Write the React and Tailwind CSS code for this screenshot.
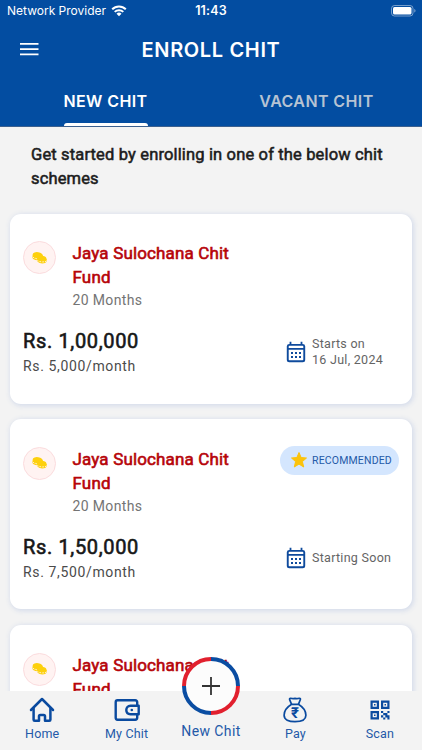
const chits = [
  { amount: "Rs. 1,00,000", monthly: "Rs. 5,000/month", starts: ["Starts on", "16 Jul, 2024"] },
  { amount: "Rs. 1,50,000", monthly: "Rs. 7,500/month", starts: ["Starting Soon"], recommended: true },
  { amount: "Rs. 2,00,000", monthly: "Rs. 10,000/month", starts: ["Starting Soon"] },
];

const WifiIcon = () => (
  <svg width="16" height="12" viewBox="0 0 16 12" fill="none" stroke="#fff" strokeWidth="2">
    <path d="M1.200 4.200a9.600 9.600 0 0 1 13.600 0" />
    <path d="M3.700 6.900a6.200 6.200 0 0 1 8.600 0" />
    <path d="M5.500 8.700a3.600 3.600 0 0 1 5 0L8 11.200z" fill="#fff" stroke="none" />
  </svg>
);

const BatteryIcon = () => (
  <svg width="26" height="12" viewBox="0 0 26 12">
    <rect x="0.500" y="0.500" width="21.500" height="10.500" rx="3" fill="none" stroke="#fff" strokeOpacity="0.450" />
    <rect x="2" y="2" width="18.500" height="7.500" rx="1.500" fill="#fff" />
    <path d="M23.300 4v3.600c.8-.3 1.200-1 1.200-1.800s-.4-1.500-1.200-1.800z" fill="#fff" fillOpacity="0.500" />
  </svg>
);

const CoinsIcon = () => (
  <svg width="16" height="14" viewBox="0 0 16 14">
    <g fill="#fdd00d">
      <ellipse cx="5.800" cy="4.200" rx="5.200" ry="3" transform="rotate(10 5.800 4.200)" />
      <path d="M.5 4.200v2.800c.6 1.500 2.400 2.100 4.300 2.200V6z" />
      <ellipse cx="9.800" cy="7.600" rx="4.800" ry="2.900" transform="rotate(10 9.800 7.600)" />
      <path d="M5 7.200v2.600c1 2.700 8.200 3.900 9.600.7V8z" />
    </g>
    <path d="M1 6.200c1 1 2.300 1.300 3.700 1.300M5.300 9.300c1.800 1.700 6.300 2.200 9 .9" fill="none" stroke="#fff3e0" strokeWidth="0.900" strokeDasharray="1.600 1" />
  </svg>
);

const CalendarIcon = () => (
  <svg width="20" height="22" viewBox="0 0 20 22" fill="#0f4b9d">
    <path
      fillRule="evenodd"
      d="M3.600.7h1.800V3h9.200V.7h1.800V3h.3A2.500 2.500 0 0 1 19.200 5.300v13.400a2.500 2.500 0 0 1-2.500 2.500H3.300A2.500 2.500 0 0 1 .8 18.700V5.300A2.500 2.500 0 0 1 3.300 3h.3zM2.700 8.800v9.700c0 .5.300.8.800.8h13c.5 0 .8-.3.800-.8V8.800zM2.700 5.400V7h14.600V5.400c0-.4-.3-.7-.8-.7h-13c-.5 0-.8.3-.8.700z"
    />
    <path d="M5 11h2v2H5zM9 11h2v2H9zM13 11h2v2h-2zM5 15h2v2H5zM9 15h2v2H9zM13 15h2v2h-2z" />
  </svg>
);

const StarIcon = () => (
  <svg width="18" height="18" viewBox="0 0 18 18">
    <path
      d="M9 1.500l2.100 5 5.400.500-4.100 3.600 1.300 5.400L9 13.100 4.300 16l1.300-5.400L1.500 7l5.400-.5z"
      fill="#fcc30b"
      stroke="#fcc30b"
      strokeLinejoin="round"
    />
  </svg>
);

const HomeIcon = () => (
  <svg width="26" height="26" viewBox="0 0 26 26" fill="none" stroke="#0a4a9f" strokeWidth="2.500" strokeLinecap="round" strokeLinejoin="round">
    <path d="M2 13L13 2l11 11" />
    <path d="M4.600 11.500v11.200c0 .7.400 1.100 1.100 1.100H10v-4.500c0-.8.500-1.300 1.300-1.300h3.400c.8 0 1.300.5 1.300 1.300v4.500h4.300c.7 0 1.100-.4 1.100-1.100V11.500" />
  </svg>
);

const WalletIcon = () => (
  <svg width="26" height="22" viewBox="0 0 26 22" fill="none" stroke="#0a4a9f" strokeWidth="2.400" strokeLinejoin="round">
    <path d="M23.200 6.500V3.200C23.200 2 22.500 1.300 21.200 1.300H3.500C2.300 1.300 1.700 2 1.700 3.200v15.600c0 1.200.6 1.900 1.800 1.900h17.700c1.300 0 2-.7 2-1.900v-3.300" />
    <path d="M16.500 6.800h8.200v8.400h-8.200c-2.700 0-4.200-1.700-4.200-4.200s1.500-4.200 4.200-4.200z" />
    <circle cx="17.800" cy="11" r="1.300" fill="#0a4a9f" stroke="none" />
  </svg>
);

const PayIcon = () => (
  <svg width="24" height="26" viewBox="0 0 24 26" fill="none" stroke="#0a4a9f" strokeWidth="1.700" strokeLinejoin="round">
    <path d="M8.600 7.300L6.700 2.800c-.4-1 .1-1.700 1.100-1.500 1.500.5 2.500.5 4.200.1 1.700.4 2.700.4 4.200-.1 1-.2 1.500.5 1.100 1.500l-1.900 4.500" />
    <path d="M8.600 7.300h6.800c4.600 2.800 7.500 7 7.500 11 0 4.400-4.600 6.400-10.900 6.400S1.100 22.700 1.100 18.300c0-4 2.900-8.200 7.500-11z" />
    <text x="12" y="20.800" textAnchor="middle" className="font-['Roboto',sans-serif] text-[15px] font-bold" fill="#0a4a9f" stroke="none">₹</text>
  </svg>
);

const ScanIcon = () => (
  <svg width="20" height="20" viewBox="0 0 20 20" fill="#0a4a9f">
    <path
      fillRule="evenodd"
      d="M.5.5h8.500V9H.5zM2.700 2.700v4.100h4.100V2.700zM11 .5h8.500V9H11zM13.200 2.700v4.100h4.100V2.700zM.5 11h8.500v8.500H.5zM2.700 13.200v4.100h4.100v-4.100z"
    />
    <path d="M4 4h1.500v1.500H4zM14.500 4H16v1.500h-1.500zM4 14.500h1.500V16H4zM11 11h2.200v2.100H11zM13.200 13.100h2.100v2.100h-2.100zM11 15.200h2.200v2.200H11zM13.200 17.400h2.100v2.100h-2.100zM15.300 15.200h2.100v2.200h-2.100zM17.400 11h2.100v2.100h-2.100zM15.300 13.100h2.100v2.100h-2.100zM17.400 15.200h2.100v4.300h-2.100z" />
  </svg>
);

const ChitCard = ({ chit }) => (
  <article className="flex h-[190px] shrink-0 flex-col rounded-[11px] bg-white px-[13px] shadow-[1px_1px_5px_1px_#d5dceb]">
    <div className="flex pt-[27.500px]">
      <div className="flex size-[33px] shrink-0 items-center justify-center rounded-full border border-[#fbdcde] bg-[#fff3f2]">
        <CoinsIcon />
      </div>
      <div className="ml-[16.500px] w-[190px]">
        <h2 className="text-[17px] leading-6 tracking-[0.15px] text-[#b60409] [-webkit-text-stroke:0.600px_#b60409]">
          Jaya Sulochana Chit Fund
        </h2>
        <p className="text-sm leading-[22px] tracking-[0.35px] text-[#747474]">20 Months</p>
      </div>
      {chit.recommended && (
        <div className="-mt-px ml-auto flex h-[29px] w-[119px] shrink-0 items-center rounded-full bg-[#d4e6fe] pl-[10px]">
          <StarIcon />
          <span className="ml-1 text-[10.500px] tracking-[0.17px] text-[#2459a8]">RECOMMENDED</span>
        </div>
      )}
    </div>
    <div className="mt-4 flex">
      <div>
        <p className="text-[20px] leading-[28px] tracking-[0.65px] text-[#171717] [-webkit-text-stroke:0.600px_#171717]">{chit.amount}</p>
        <p className="text-sm leading-[22px] tracking-[0.64px] text-[#4b4b4b]">{chit.monthly}</p>
      </div>
      <div className="mt-[14px] ml-auto flex h-[22px] w-[113px] items-center gap-[6px]">
        <CalendarIcon />
        <div className="text-[12.500px] leading-4 tracking-[0.28px] whitespace-nowrap text-[#646464]">
          {chit.starts.map((line) => (
            <p key={line}>{line}</p>
          ))}
        </div>
      </div>
    </div>
  </article>
);

const NavItem = ({ icon, label }) => (
  <div className="flex flex-1 flex-col items-center">
    <div className="mt-[6px] flex h-[26px] items-center">{icon}</div>
    <span className="mt-[3px] text-[12.500px] leading-4 tracking-[0.15px] text-[#2459a8]">{label}</span>
  </div>
);

const App = () => {
  return (
    <div className="flex h-[750px] w-[422px] flex-col overflow-hidden bg-[#f3f3f3] font-['Roboto',sans-serif]">
      <header className="flex h-[127px] shrink-0 flex-col border-b border-[#3b608f] bg-[#034da1] font-['Inter',sans-serif] text-white">
        {/* Status bar */}
        <div className="grid h-[22px] grid-cols-3 items-center pr-[5px] pl-[7px]">
          <div className="flex items-center gap-[5px] text-[12px] whitespace-nowrap">
            Network Provider
            <WifiIcon />
          </div>
          <div className="pr-[2px] text-center text-[12.500px] font-semibold tracking-[0.15px]">11:43</div>
          <div className="flex justify-end">
            <BatteryIcon />
          </div>
        </div>

        {/* Title */}
        <div className="grid h-[54px] grid-cols-[60px_1fr_60px] items-center">
          <svg className="ml-[19.500px]" width="19" height="14" viewBox="0 0 19 14" fill="#fff">
            <path d="M0 1h18.500v1.800H0zM0 6.200h18.500V8H0zM0 11.400h18.500v1.800H0z" />
          </svg>
          <h1 className="pt-px text-center text-[20px] font-semibold tracking-[0.65px]">ENROLL CHIT</h1>
        </div>

        {/* Tabs */}
        <div className="grid flex-1 grid-cols-2 text-[16px] font-semibold tracking-[0.4px]">
          <div className="flex flex-col items-center justify-between">
            <span className="mt-[13px]">NEW CHIT</span>
            <div className="h-[3px] w-[84px] rounded-t-[3px] bg-white" />
          </div>
          <span className="mt-[13px] text-center text-[#b6c3d3]">VACANT CHIT</span>
        </div>
      </header>

      <main className="flex min-h-0 flex-1 flex-col gap-[15.800px] overflow-hidden px-[10px]">
        <p className="mt-4 mb-[6.800px] px-[21px] text-[16.500px] leading-6 tracking-[0.15px] text-[#1c1c1c] [-webkit-text-stroke:0.550px_#1c1c1c]">
          Get started by enrolling in one of the below chit schemes
        </p>
        {chits.map((chit) => (
          <ChitCard key={chit.amount} chit={chit} />
        ))}
      </main>

      <nav className="relative flex h-[59px] shrink-0 bg-[#f3f3f3]">
        <NavItem icon={<HomeIcon />} label="Home" />
        <NavItem icon={<WalletIcon />} label="My Chit" />
        <div className="relative flex flex-1 justify-center">
          <svg className="absolute -top-[34px]" width="58" height="58" viewBox="0 0 58 58" fill="none">
            <circle cx="29" cy="29" r="27" fill="#fcfcfc" />
            <g strokeWidth="4">
              <path d="M29 2a27 27 0 0 1 27 27" stroke="#0a4da2" />
              <path d="M56 29a27 27 0 0 1-27 27" stroke="#e1202e" />
              <path d="M29 56A27 27 0 0 1 2 29" stroke="#0a4da2" />
              <path d="M2 29A27 27 0 0 1 29 2" stroke="#e1202e" />
            </g>
            <path d="M29 20v18M20 29h18" stroke="#333" strokeWidth="1.800" />
          </svg>
          <span className="mt-[31px] text-[14px] leading-[18px] tracking-[0.4px] text-[#2459a8]">New Chit</span>
        </div>
        <NavItem icon={<PayIcon />} label="Pay" />
        <NavItem icon={<ScanIcon />} label="Scan" />
      </nav>
    </div>
  );
};

export default App;
